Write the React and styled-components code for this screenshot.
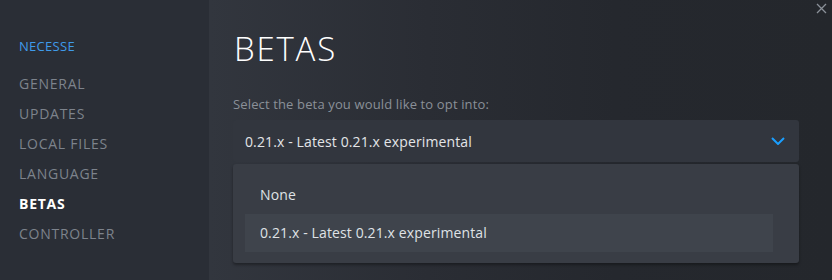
import React from "react";
import styled, { createGlobalStyle } from "styled-components";

const Global = createGlobalStyle`
  html, body { margin: 0; padding: 0; background: #23262c; }
  body { width: 832px; height: 280px; overflow: hidden; font-family: "Open Sans", "Liberation Sans", sans-serif; }
  * { box-sizing: border-box; }
`;

const Window = styled.div`
  position: relative;
  display: flex;
  width: 832px;
  height: 280px;
  overflow: hidden;
`;

const Sidebar = styled.nav`
  width: 209px;
  flex-shrink: 0;
  background: #2a2e36;
  padding: 31px 0 0 19px;
  display: flex;
  flex-direction: column;
`;

const GameTitle = styled.div`
  height: 30px;
  line-height: 30px;
  margin-bottom: 8px;
  font-size: 13px;
  color: #3f9bea;
  letter-spacing: 0.3px;
`;

const NavItem = styled.div`
  height: 30px;
  line-height: 30px;
  font-size: 14px;
  letter-spacing: 0.75px;
  color: ${(p) => (p.$active ? "#ffffff" : "#7d838c")};
  font-weight: ${(p) => (p.$active ? 700 : 400)};
`;

const Main = styled.main`
  flex: 1;
  background: linear-gradient(to right, #32363e 0%, #2a2d34 35%, #25282e 65%, #24272c 100%);
  padding: 29px 33px 0 24px;
  display: flex;
  flex-direction: column;
`;

const Heading = styled.h1`
  margin: 0 0 0 1px;
  height: 40px;
  line-height: 40px;
  font-size: 33px;
  font-weight: 300;
  letter-spacing: 1.8px;
  color: #ffffff;
`;

const Label = styled.div`
  margin-top: 26px;
  height: 25px;
  line-height: 18px;
  font-size: 13px;
  letter-spacing: 0.14px;
  color: #8a9098;
`;

const Select = styled.div`
  height: 42px;
  border-radius: 3px;
  background: #32363e;
  display: flex;
  align-items: center;
  justify-content: space-between;
  padding: 0 14px 0 12px;
  font-size: 14px;
  letter-spacing: 0.12px;
  color: #e3e5e8;
`;

const Menu = styled.div`
  margin-top: 2px;
  height: 99px;
  border-radius: 3px;
  background: #393d45;
  padding: 12px 26px 11px 12px;
  box-shadow: 0 2px 3px rgba(0, 0, 0, 0.35);
  display: flex;
  flex-direction: column;
`;

const Option = styled.div`
  height: 38px;
  line-height: 38px;
  padding-left: 15px;
  font-size: 14px;
  letter-spacing: 0.12px;
  color: #dfe2e6;
  background: ${(p) => (p.$selected ? "#3f444c" : "transparent")};
`;

const Close = styled.div`
  position: absolute;
  top: 3px;
  right: 5px;
  width: 11px;
  height: 11px;
  display: flex;
`;

const Chevron = () => (
  <svg width="14" height="8" viewBox="0 0 14 8">
    <path d="M1 1 L7 7 L13 1" fill="none" stroke="#1a9fff" strokeWidth="2" />
  </svg>
);

export default function App() {
  return (
    <>
      <Global />
      <Window>
        <Sidebar>
          <GameTitle>NECESSE</GameTitle>
          <NavItem>GENERAL</NavItem>
          <NavItem>UPDATES</NavItem>
          <NavItem>LOCAL FILES</NavItem>
          <NavItem>LANGUAGE</NavItem>
          <NavItem $active>BETAS</NavItem>
          <NavItem>CONTROLLER</NavItem>
        </Sidebar>
        <Main>
          <Heading>BETAS</Heading>
          <Label>Select the beta you would like to opt into:</Label>
          <Select>
            <span>0.21.x - Latest 0.21.x experimental</span>
            <Chevron />
          </Select>
          <Menu>
            <Option>None</Option>
            <Option $selected>0.21.x - Latest 0.21.x experimental</Option>
          </Menu>
        </Main>
        <Close>
          <svg width="11" height="11" viewBox="0 0 11 11">
            <path d="M1 1 L10 10 M10 1 L1 10" stroke="#8b9199" strokeWidth="1.3" />
          </svg>
        </Close>
      </Window>
    </>
  );
}
